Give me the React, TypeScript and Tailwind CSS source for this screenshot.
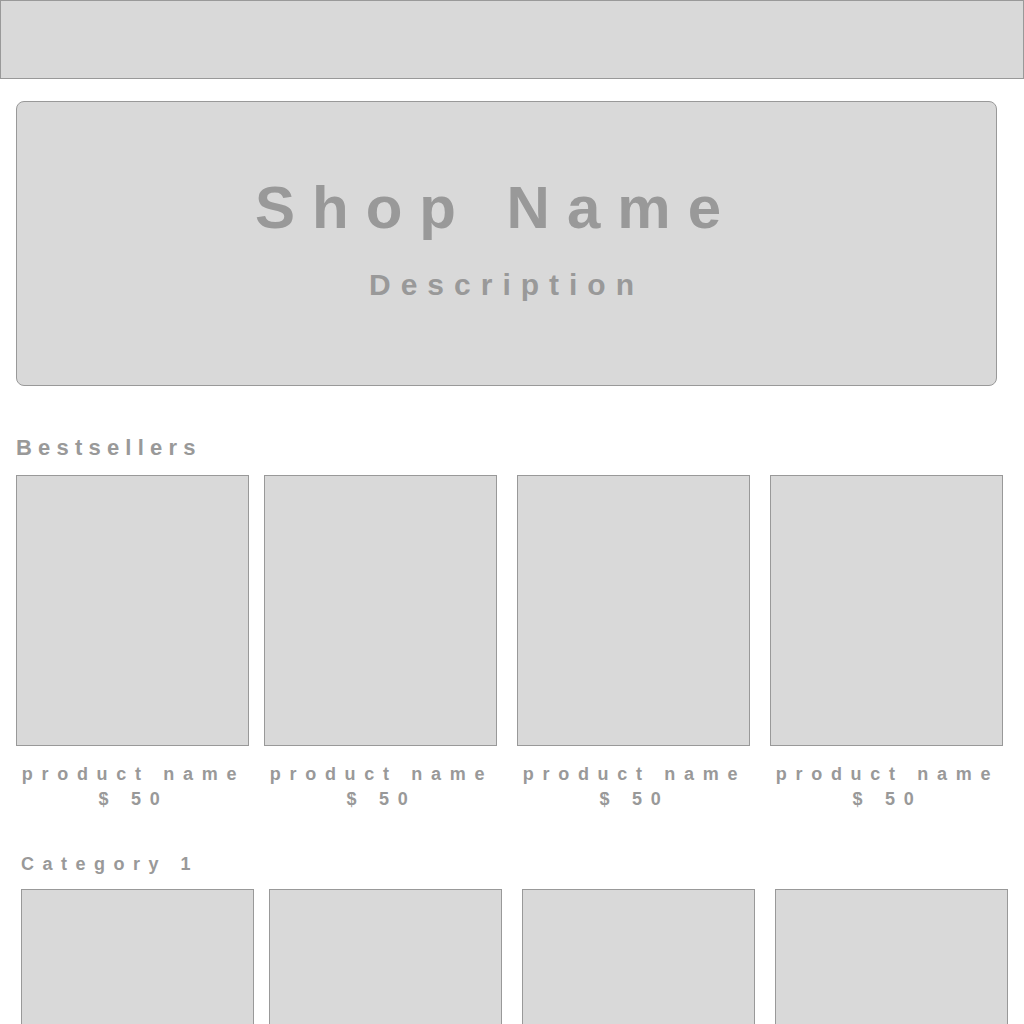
const font = { fontFamily: '"Liberation Sans", Arial, sans-serif' }

const gaps = ["", "ml-[15px]", "ml-5", "ml-5"]

function ProductCard({ className }: { className: string }) {
  return (
    <div className={`w-[233px] shrink-0 ${className}`}>
      <div className="h-[271px] border border-[#999999] bg-[#d9d9d9]" />
      <div className="mt-[16px] flex flex-col items-center whitespace-nowrap text-[18px] leading-[25px] font-bold tracking-[8.7px] text-[#999999]">
        <div className="pl-[2px]">product name</div>
        <div className="pl-[2px]">$ 50</div>
      </div>
    </div>
  )
}

function Section({ title, className, titleClass }: { title: string; className: string; titleClass: string }) {
  return (
    <section className={className}>
      <h2 className={`font-bold leading-none text-[#999999] ${titleClass}`}>{title}</h2>
      <div className="mt-4 flex">
        {gaps.map((g, i) => (
          <ProductCard key={i} className={g} />
        ))}
      </div>
    </section>
  )
}

export default function App() {
  return (
    <div className="min-h-screen bg-white" style={font}>
      <header className="h-[79px] w-full border border-[#999999] bg-[#d9d9d9]" />

      <div className="ml-4 mt-[22px] flex h-[285px] w-[981px] flex-col items-center rounded-lg border border-[#999999] bg-[#d9d9d9] pt-[76px]">
        <h1 className="pr-[20px] text-[60px] font-bold leading-none tracking-[17px] text-[#999999]">Shop Name</h1>
        <p className="mt-[32px] text-[30px] font-bold leading-none tracking-[10px] text-[#999999]">Description</p>
      </div>

      <Section title="Bestsellers" className="mt-[51px] pl-4" titleClass="text-[22px] tracking-[6.2px]" />
      <Section title="Category 1" className="mt-[43px] pl-[21px]" titleClass="text-[18px] tracking-[8.5px]" />
    </div>
  )
}
